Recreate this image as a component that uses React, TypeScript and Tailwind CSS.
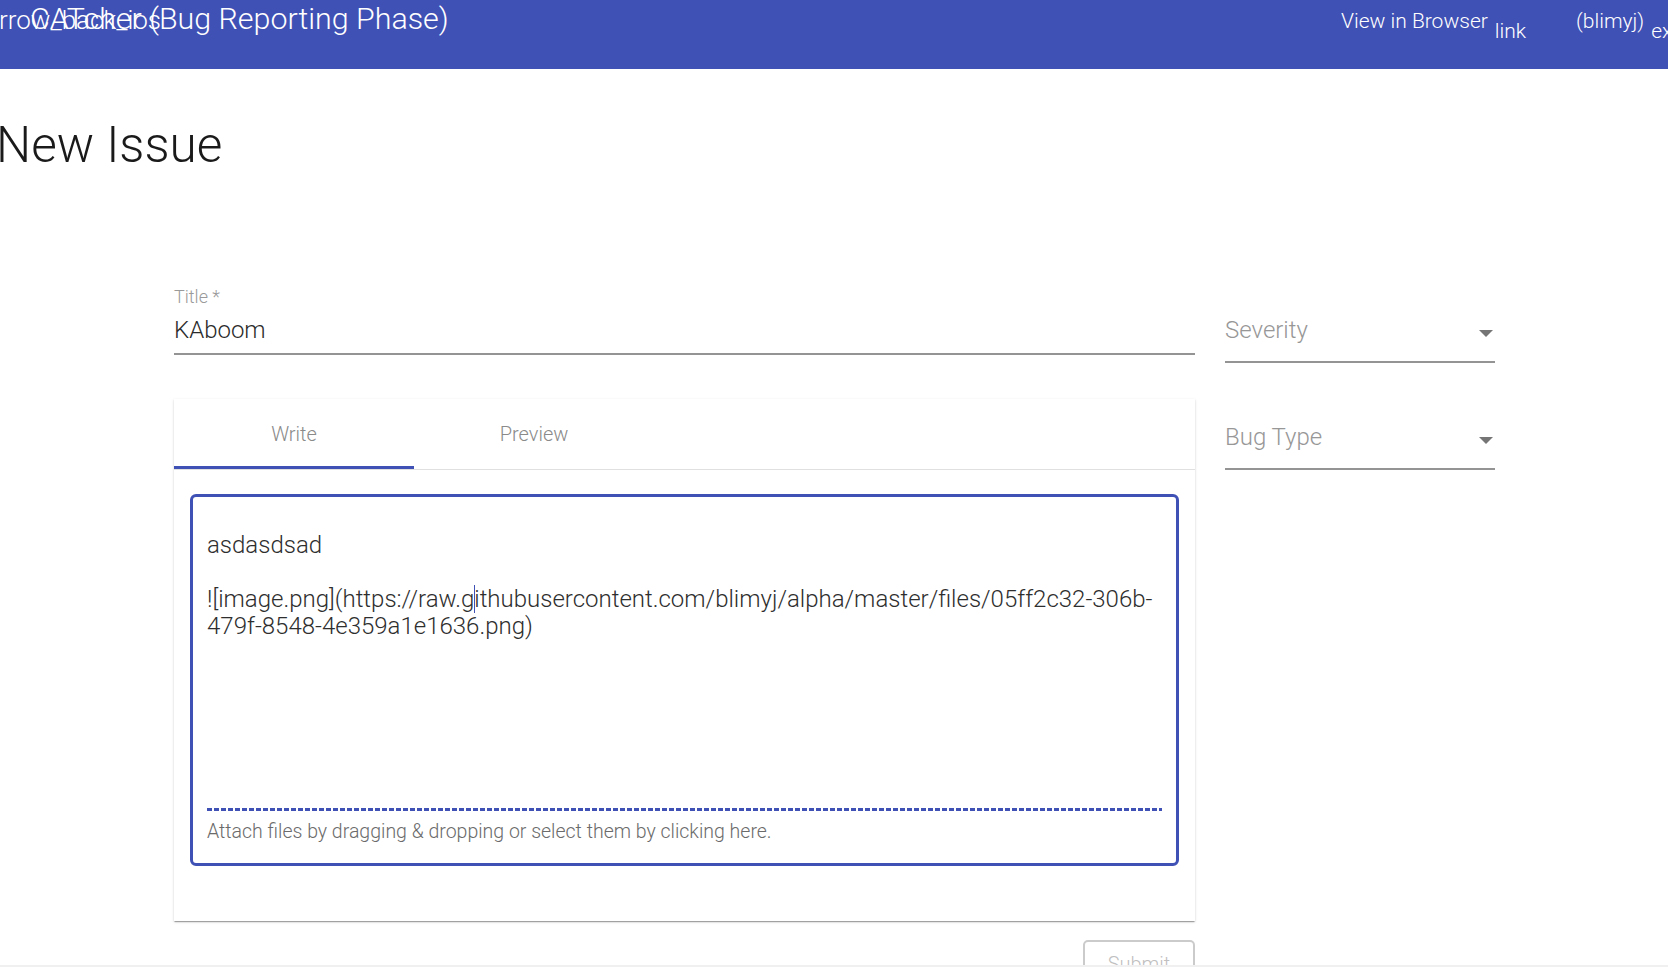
import { useState } from "react";

const fieldUnderline = "border-b-2 border-[#949494]";

function SelectField({ label, className }: { label: string; className?: string }) {
    return (
        <div className={`flex items-start justify-between pb-[19px] ${fieldUnderline} ${className ?? ""}`}>
            <span className="text-[24px] leading-[24px] font-light text-[#979797]">{label}</span>
            {/* select arrow */}
            <span className="mt-[12px] mr-[2px] w-0 h-0 border-x-[7px] border-x-transparent border-t-[7px] border-t-[#757575]" />
        </div>
    );
}

export default function App() {
    const [tab, setTab] = useState<"write" | "preview">("write");

    return (
        <div className="h-screen w-full overflow-hidden flex flex-col bg-white font-['Roboto','Liberation_Sans',sans-serif]">
            {/* Toolbar */}
            <header className="h-[69px] shrink-0 bg-[#3f51b5] text-white flex overflow-hidden">
                <div className="w-[1341px] shrink-0 flex items-baseline pt-[4px]">
                    <span className="w-0 whitespace-nowrap -ml-[15px] text-[26px] leading-[26px] font-light">arrow_back_ios</span>
                    <h1 className="pl-[45px] text-[30.4px] leading-[30px] font-light whitespace-nowrap">
                        CATcher (Bug Reporting Phase)
                    </h1>
                </div>
                <div className="flex items-start whitespace-nowrap text-[21px] leading-[21px] font-light">
                    <span className="pt-[11px]">View in Browser</span>
                    <span className="pt-[21px] ml-[7px]">link</span>
                    <span className="pt-[11px] ml-[50px]">(blimyj)</span>
                    <span className="pt-[21px] ml-[7px]">exit_to_app</span>
                </div>
            </header>

            <main className="flex-1 min-h-0 overflow-hidden">
                <h2 className="mt-[51px] -ml-[4px] text-[49.5px] leading-[50px] font-light text-[#1a1a1a]">New Issue</h2>

                <div className="mt-[116px] ml-[174px] flex items-start">
                    {/* Left column */}
                    <div className="w-[1021px] flex flex-col">
                        <label className="mt-[2px] text-[18px] leading-[18px] font-light text-[#9a9a9a]">Title *</label>
                        <div className={`mt-[12px] pb-[8px] ${fieldUnderline}`}>
                            <span className="text-[24px] leading-[24px] font-light text-[#2b2b2b]">KAboom</span>
                        </div>

                        <div className="mt-[44px] h-[522px] flex flex-col bg-white shadow-[0_2px_1px_-1px_rgba(0,0,0,0.2),0_1px_1px_0_rgba(0,0,0,0.14),0_1px_3px_0_rgba(0,0,0,0.12)]">
                            <div className="h-[71px] flex border-b border-[#e0e0e0]">
                                <button
                                    onClick={() => setTab("write")}
                                    className={`w-[240px] h-[70px] flex items-center justify-center text-[20px] font-light text-[#8a8a8a] ${tab === "write" ? "border-b-[3px] border-[#3f51b5] pt-[3px]" : ""}`}
                                >
                                    Write
                                </button>
                                <button
                                    onClick={() => setTab("preview")}
                                    className={`w-[240px] h-[70px] flex items-center justify-center text-[20px] font-light text-[#8a8a8a] ${tab === "preview" ? "border-b-[3px] border-[#3f51b5] pt-[3px]" : ""}`}
                                >
                                    Preview
                                </button>
                            </div>

                            <div className="mt-[24px] mx-[16px] h-[372px] border-[3px] border-[#3f51b5] rounded-[6px] flex flex-col px-[14px] pt-[35px]">
                                <div className="flex-1 text-[24px] leading-[26.5px] font-light text-[#2e2e2e] whitespace-nowrap">
                                    <div>asdasdsad</div>
                                    <div>&nbsp;</div>
                                    <div>
                                        ![image.png](https://raw.g
                                        <span className="inline-block align-[-6px] w-px h-[28px] -mr-px bg-[#3f51b5]" />
                                        ithubusercontent.com/blimyj/alpha/master/files/05ff2c32-306b-
                                    </div>
                                    <div>479f-8548-4e359a1e1636.png)</div>
                                </div>
                                <div className="h-[3px] bg-[repeating-linear-gradient(90deg,#3f51b5_0px,#3f51b5_5px,transparent_5px,transparent_7px)]" />
                                <div className="mt-[10px] mb-[20px] text-[19.5px] leading-[22px] font-light text-[#6b6b6b]">
                                    Attach files by dragging &amp; dropping or select them by clicking here.
                                </div>
                            </div>
                        </div>

                        <div className="mt-[19px] flex justify-end">
                            <button className="w-[112px] h-[48px] border-2 border-[#cbcbcb] rounded-[5px] text-[20px] font-light text-[#c0c0c0]">
                                Submit
                            </button>
                        </div>
                    </div>

                    {/* Right column */}
                    <div className="ml-[30px] w-[270px] pt-[32px] flex flex-col">
                        <SelectField label="Severity" />
                        <SelectField label="Bug Type" className="mt-[62px]" />
                    </div>
                </div>
            </main>

            <div className="h-[2px] shrink-0 bg-[#f0f0f0]" />
        </div>
    );
}
